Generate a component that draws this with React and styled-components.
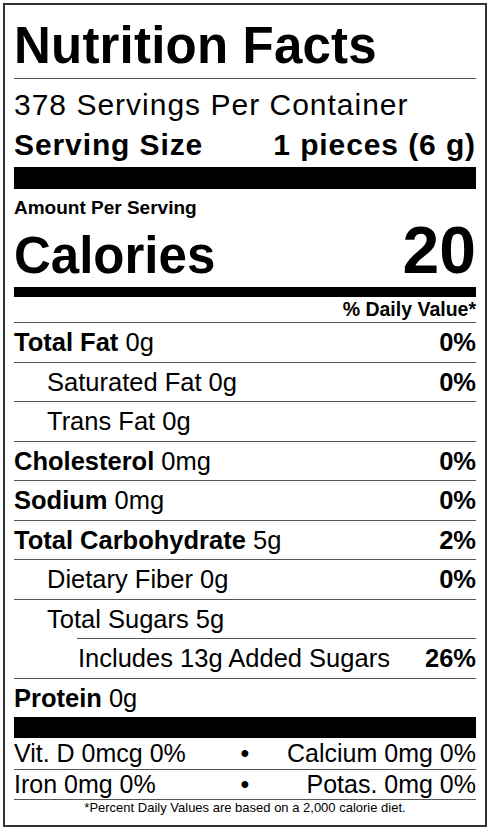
import React from 'react';
import styled, { createGlobalStyle } from 'styled-components';

const GlobalStyle = createGlobalStyle`
  body {
    margin: 0;
    background: #fff;
    font-family: "Liberation Sans", Arial, sans-serif;
    color: #000;
  }
`;

const Label = styled.div`
  box-sizing: border-box;
  width: 484px;
  margin: 3px;
  padding: 0 9px;
  border: 2px solid #333;
  background: #fff;
`;

const Title = styled.h1`
  margin: 0;
  padding-top: 8px;
  font-size: 51px;
  line-height: 65px;
  font-weight: 700;
  letter-spacing: 0.2px;
  border-bottom: 1px solid #555;
`;

const Servings = styled.div`
  padding-top: 6px;
  font-size: 30px;
  line-height: 40px;
  letter-spacing: 1px;
`;

const ServingSize = styled.div`
  display: flex;
  justify-content: space-between;
  font-size: 30px;
  line-height: 40px;
  font-weight: 700;
  letter-spacing: 0.9px;
`;

const Bar = styled.div`
  height: ${p => p.$h}px;
  margin-top: ${p => p.$mt || 0}px;
  background: #000;
`;

const Amount = styled.div`
  padding-top: 10px;
  font-size: 19px;
  line-height: 18px;
  font-weight: 700;
`;

const CaloriesRow = styled.div`
  display: flex;
  justify-content: space-between;
  align-items: baseline;
  line-height: 1;
  font-weight: 700;
`;

const CaloriesLabel = styled.span`
  font-size: 51px;
`;

const CaloriesValue = styled.span`
  font-size: 66px;
`;

const DailyValue = styled.div`
  text-align: right;
  font-size: 19.5px;
  line-height: 25px;
  font-weight: 700;
`;

const Row = styled.div`
  display: flex;
  justify-content: space-between;
  margin-left: ${p => p.$offset || 0}px;
  padding-left: ${p => p.$indent || 0}px;
  border-top: 1px solid #555;
  font-size: 25.5px;
  line-height: 38.5px;
`;

const Name = styled.span`
  font-weight: ${p => (p.$bold ? 700 : 400)};
`;

const Percent = styled.span`
  font-weight: 700;
`;

const VitRow = styled.div`
  display: grid;
  grid-template-columns: 1fr auto 1fr;
  font-size: 25px;
  line-height: ${p => p.$h}px;
  border-bottom: 1px solid #555;
`;

const VitRight = styled.span`
  text-align: right;
`;

const Footnote = styled.div`
  padding-bottom: 9px;
  text-align: center;
  font-size: 13px;
  line-height: 16px;
`;

const nutrients = [
  { name: 'Total Fat', amount: '0g', dv: '0%', bold: true },
  { name: 'Saturated Fat', amount: '0g', dv: '0%', indent: 33 },
  { name: 'Trans Fat', amount: '0g', indent: 33 },
  { name: 'Cholesterol', amount: '0mg', dv: '0%', bold: true },
  { name: 'Sodium', amount: '0mg', dv: '0%', bold: true },
  { name: 'Total Carbohydrate', amount: '5g', dv: '2%', bold: true },
  { name: 'Dietary Fiber', amount: '0g', dv: '0%', indent: 33 },
  { name: 'Total Sugars', amount: '5g', indent: 33 },
  { name: 'Includes 13g Added Sugars', dv: '26%', offset: 63, indent: 1 },
  { name: 'Protein', amount: '0g', bold: true },
];

const App = () => {
  return (
    <Label>
      <GlobalStyle />
      <Title>Nutrition Facts</Title>
      <Servings>378 Servings Per Container</Servings>
      <ServingSize>
        <span>Serving Size</span>
        <span>1 pieces (6 g)</span>
      </ServingSize>
      <Bar $h={22} $mt={2} />
      <Amount>Amount Per Serving</Amount>
      <CaloriesRow>
        <CaloriesLabel>Calories</CaloriesLabel>
        <CaloriesValue>20</CaloriesValue>
      </CaloriesRow>
      <Bar $h={10} $mt={4} />
      <DailyValue>% Daily Value*</DailyValue>
      {nutrients.map(n => (
        <Row key={n.name} $indent={n.indent} $offset={n.offset}>
          <span>
            <Name $bold={n.bold}>{n.name}</Name>
            {n.amount && ' ' + n.amount}
          </span>
          {n.dv && <Percent>{n.dv}</Percent>}
        </Row>
      ))}
      <Bar $h={21} />
      <VitRow $h={31}>
        <span>Vit. D 0mcg 0%</span>
        <span>•</span>
        <VitRight>Calcium 0mg 0%</VitRight>
      </VitRow>
      <VitRow $h={29}>
        <span>Iron 0mg 0%</span>
        <span>•</span>
        <VitRight>Potas. 0mg 0%</VitRight>
      </VitRow>
      <Footnote>*Percent Daily Values are based on a 2,000 calorie diet.</Footnote>
    </Label>
  );
};

export default App;
